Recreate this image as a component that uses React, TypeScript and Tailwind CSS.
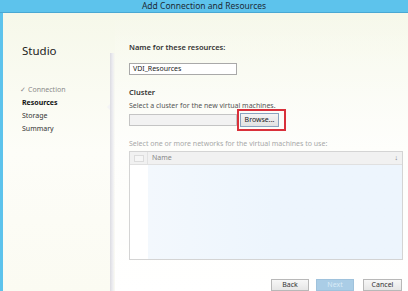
const navItems = [
  { label: "Connection", state: "done" },
  { label: "Resources", state: "current" },
  { label: "Storage", state: "todo" },
  { label: "Summary", state: "todo" },
];

const App = () => {
  return (
    <div
      className="w-[408px] h-[291px] overflow-hidden flex flex-col text-[#222]"
      style={{ fontFamily: '"Noto Sans", "Open Sans", sans-serif' }}
    >
      {/* title bar */}
      <div className="h-[13px] shrink-0 bg-[#5dc3ec] border-b border-[#49a8d3] text-center text-[8.5px] leading-[12px] text-[#1d2b36]">
        Add Connection and Resources
      </div>

      <div className="flex flex-1 border-l-[3px] border-[#5dc3ec] bg-gradient-to-b from-[#f6f8ea] via-[#fdfdf8] to-[#fbfbf2]">
        {/* sidebar */}
        <div className="w-[107px] shrink-0 pt-[30px] pl-[19px] relative">
          <div className="text-[11.5px] leading-[15px] text-[#222]">Studio</div>
          <div className="mt-[25px] flex flex-col text-[7px] leading-[13px]">
            {navItems.map((item) => (
              <div
                key={item.label}
                className={
                  item.state === "done"
                    ? "text-[#8a8a8a] -ml-[2px]"
                    : item.state === "current"
                    ? "font-bold text-[#111]"
                    : "text-[#333]"
                }
              >
                {item.state === "done" && <span className="mr-[2px] text-[#8a8a8a]">✓</span>}
                {item.label}
              </div>
            ))}
          </div>
        </div>

        {/* separator with pointer */}
        <div className="w-[5px] shrink-0 mt-[40px] relative bg-gradient-to-r from-[#dcdce2] via-[#ececf0] to-transparent">
          <div className="absolute top-[51px] -left-[3px] w-0 h-0 border-y-[3px] border-y-transparent border-r-[3px] border-r-[#f4f4f6]" />
        </div>

        {/* main */}
        <div className="flex-1 pl-[14px] pr-[5px] pt-[29px] flex flex-col bg-gradient-to-b from-transparent to-[#ffffff]">
          <div className="text-[7.5px] leading-[10px] font-semibold text-[#333]">Name for these resources:</div>
          <div className="mt-[11px] w-[108px] h-[12px] border border-[#a9a9a9] bg-white text-[7px] leading-[10px] pl-[3px] text-[#222]">
            VDI_Resources
          </div>

          <div className="mt-[12px] text-[7.5px] leading-[10px] font-semibold text-[#333]">Cluster</div>
          <div className="mt-[4px] text-[7px] leading-[10px] text-[#555]">Select a cluster for the new virtual machines.</div>

          <div className="mt-[2px] flex items-center gap-[2px] relative">
            <div className="w-[108px] h-[12px] border border-[#c4c4c4] bg-[#f2f2f2]" />
            <div className="ml-[1px] w-[39px] h-[14px] border border-[#8aa3bf] bg-gradient-to-b from-[#f4f4f4] to-[#e2e2e2] text-center text-[7px] leading-[12px] text-[#222]">
              Browse...
            </div>
            <div className="absolute left-[108px] -top-[4px] w-[49px] h-[22px] border-2 border-[#d9303a]" />
          </div>

          <div className="mt-[12px] text-[7px] leading-[10px] text-[#a8a8a8]">
            Select one or more networks for the virtual machines to use:
          </div>

          <div className="mt-[2px] w-[274px] h-[109px] border border-[#d4d4d4] bg-white flex flex-col">
            <div className="h-[13px] shrink-0 flex items-center bg-[#f1f1f1] border-b border-[#e0e0e0]">
              <div className="w-[18px] h-full flex items-center justify-center border-r border-[#e2e2e2]">
                <div className="w-[10px] h-[7px] border border-[#dcdcdc] bg-[#f6f6f6]" />
              </div>
              <div className="flex-1 pl-[4px] text-[7px] text-[#888]">Name</div>
              <div className="pr-[4px] text-[7px] text-[#777]">↓</div>
            </div>
            <div className="flex flex-1">
              <div className="w-[18px] bg-white" />
              <div className="flex-1 bg-gradient-to-r from-[#f3f8fd] via-[#edf5fd] to-[#edf5fd]" />
            </div>
          </div>

          <div className="mt-[19px] flex items-center w-[274px]">
            <div className="ml-[142px] w-[38px] h-[12px] border border-[#b8b8b8] bg-gradient-to-b from-[#f7f7f7] to-[#e6e6e6] text-center text-[7px] leading-[10px] text-[#333]">
              Back
            </div>
            <div className="ml-[7px] w-[38px] h-[12px] border border-[#9fc2dc] bg-[#aacde6] text-center text-[7px] leading-[10px] text-[#d9ebf7]">
              Next
            </div>
            <div className="ml-[9px] w-[39px] h-[12px] border border-[#b8b8b8] bg-gradient-to-b from-[#f7f7f7] to-[#e6e6e6] text-center text-[7px] leading-[10px] text-[#333]">
              Cancel
            </div>
          </div>
        </div>
      </div>
    </div>
  );
};

export default App;
